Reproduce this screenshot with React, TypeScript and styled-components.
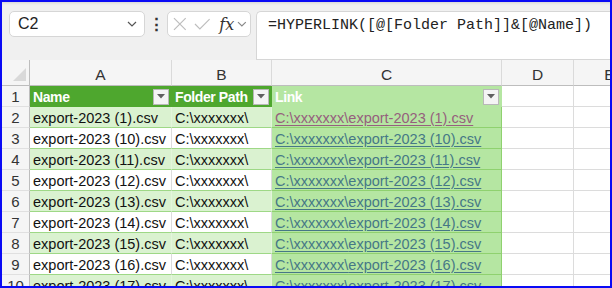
import styled, { createGlobalStyle } from "styled-components";

const GlobalStyle = createGlobalStyle`
  html, body {
    margin: 0;
    padding: 0;
    background: #ffffff;
  }
  * {
    box-sizing: border-box;
  }
`;

const Frame = styled.div`
  width: 612px;
  height: 288px;
  border: 2px solid #0a0af5;
  overflow: hidden;
  display: flex;
  flex-direction: column;
  font-family: "Liberation Sans", Arial, sans-serif;
  background: #ffffff;
`;

const Toolbar = styled.div`
  height: 58px;
  flex-shrink: 0;
  display: flex;
  align-items: flex-start;
  padding: 9px 0 0 7px;
  background: #f0f0f0;
  box-shadow: inset 0 3px 3px -2px rgba(0, 0, 0, 0.12);
`;

const NameBox = styled.div`
  width: 136px;
  height: 26px;
  display: flex;
  align-items: center;
  justify-content: space-between;
  padding: 0 7px 0 8px;
  background: #ffffff;
  border: 1px solid #d6d6d6;
  border-radius: 5px;
  font-size: 16px;
  color: #222;
`;

const Dots = styled.div`
  width: 22px;
  height: 26px;
  display: flex;
  align-items: center;
  justify-content: center;
  font-size: 17px;
  font-weight: bold;
  color: #333;
`;

const FuncBox = styled.div`
  width: 84px;
  height: 26px;
  display: flex;
  align-items: center;
  gap: 7px;
  padding: 0 3px 0 5px;
  background: #ffffff;
  border: 1px solid #d6d6d6;
  border-radius: 5px;
`;

const Fx = styled.span`
  font-family: "DejaVu Serif", "Liberation Serif", serif;
  font-style: italic;
  font-size: 16px;
  color: #333;
  margin: 0 -4px 0 2px;
`;

const FormulaBox = styled.div`
  flex: 1;
  height: 49px;
  margin-left: 5px;
  padding: 5px 0 0 11px;
  background: #ffffff;
  border: 1px solid #d6d6d6;
  border-right: none;
  border-radius: 5px 0 0 0;
  font-family: "Liberation Mono", "DejaVu Sans Mono", monospace;
  font-size: 15px;
  color: #222;
  white-space: nowrap;
`;

const Row = styled.div<{ $height: number }>`
  display: grid;
  grid-template-columns: 28px 142px 100px 230px 72px 72px;
  height: ${(p) => p.$height}px;
  flex-shrink: 0;
`;

const ColHead = styled.div`
  display: flex;
  align-items: center;
  justify-content: center;
  padding-top: 4px;
  background: #f5f5f5;
  border-right: 1px solid #dadada;
  border-bottom: 1px solid #bdbdbd;
  font-size: 15.5px;
  color: #333;
  overflow: hidden;
`;

const Corner = styled(ColHead)`
  align-items: flex-end;
  justify-content: flex-end;
  padding: 0 3px 4px 0;
  border-right: 1px solid #bdbdbd;
`;

const RowHead = styled.div`
  display: flex;
  align-items: center;
  justify-content: center;
  background: #f5f5f5;
  border-right: 1px solid #bdbdbd;
  border-bottom: 1px solid #e0e0e0;
  font-size: 15px;
  color: #333;
`;

type Tone = "header" | "headerLight" | "band" | "plain" | "link" | "empty";

const fills: Record<Tone, string> = {
  header: "#4ea72e",
  headerLight: "#b5e6a2",
  band: "#daf2d0",
  plain: "#ffffff",
  link: "#b5e6a2",
  empty: "#ffffff",
};

const rightLines: Record<Tone, string> = {
  header: "#4ea72e",
  headerLight: "#b5e6a2",
  band: "#e4f5dc",
  plain: "#dcdcdc",
  link: "#8fd16f",
  empty: "#dcdcdc",
};

const bottomLines: Record<Tone, string> = {
  header: "#4ea72e",
  headerLight: "#b5e6a2",
  band: "#9ed886",
  plain: "#9ed886",
  link: "#8fd16f",
  empty: "#dcdcdc",
};

const isHeader = (t: Tone) => t === "header" || t === "headerLight";

const Cell = styled.div<{ $tone: Tone }>`
  display: flex;
  align-items: center;
  justify-content: space-between;
  gap: 2px;
  padding: 1px 2px 0 3px;
  background: ${(p) => fills[p.$tone]};
  border-right: 1px solid ${(p) => rightLines[p.$tone]};
  border-bottom: 1px solid ${(p) => bottomLines[p.$tone]};
  font-size: ${(p) => (isHeader(p.$tone) ? "14px" : "14.5px")};
  font-weight: ${(p) => (isHeader(p.$tone) ? "bold" : "normal")};
  letter-spacing: ${(p) => (isHeader(p.$tone) ? "-0.4px" : "0")};
  color: ${(p) => (isHeader(p.$tone) ? "#ffffff" : "#111")};
  white-space: nowrap;
  overflow: hidden;
`;

const FilterButton = styled.span`
  width: 16px;
  height: 16px;
  flex-shrink: 0;
  display: flex;
  align-items: center;
  justify-content: center;
  background: #f4f4f4;
  border: 1px solid #b8b8b8;
`;

const LinkText = styled.span<{ $visited?: boolean }>`
  color: ${(p) => (p.$visited ? "#96607d" : "#467886")};
  text-decoration: underline;
  text-underline-offset: 2px;
`;

function Chevron({ color = "#555" }: { color?: string }) {
  return (
    <svg width="10" height="6" viewBox="0 0 10 6">
      <path d="M1 1 L5 5 L9 1" fill="none" stroke={color} strokeWidth="1.2" />
    </svg>
  );
}

function DownTriangle() {
  return (
    <svg width="8" height="5" viewBox="0 0 8 5">
      <path d="M0 0 H8 L4 4.5 Z" fill="#606060" />
    </svg>
  );
}

const files = [1, 10, 11, 12, 13, 14, 15, 16, 17];

export default function App() {
  return (
    <>
      <GlobalStyle />
      <Frame>
        <Toolbar>
          <NameBox>
            <span>C2</span>
            <Chevron />
          </NameBox>
          <Dots>⋮</Dots>
          <FuncBox>
            <svg width="14" height="14" viewBox="0 0 14 14">
              <path d="M1 1 L13 13 M13 1 L1 13" stroke="#bdbdbd" strokeWidth="1.2" />
            </svg>
            <svg width="17" height="13" viewBox="0 0 17 13">
              <path d="M1 6 L6 11 L16 1" fill="none" stroke="#bdbdbd" strokeWidth="1.2" />
            </svg>
            <Fx>fx</Fx>
            <Chevron color="#888" />
          </FuncBox>
          <FormulaBox>=HYPERLINK([@[Folder Path]]&amp;[@Name])</FormulaBox>
        </Toolbar>

        <Row $height={26}>
          <Corner>
            <svg width="13" height="13" viewBox="0 0 13 13">
              <path d="M13 0 V13 H0 Z" fill="#d9d9d9" />
            </svg>
          </Corner>
          <ColHead>A</ColHead>
          <ColHead>B</ColHead>
          <ColHead>C</ColHead>
          <ColHead>D</ColHead>
          <ColHead>E</ColHead>
        </Row>

        <Row $height={21}>
          <RowHead>1</RowHead>
          <Cell $tone="header">
            <span>Name</span>
            <FilterButton>
              <DownTriangle />
            </FilterButton>
          </Cell>
          <Cell $tone="header">
            <span>Folder Path</span>
            <FilterButton>
              <DownTriangle />
            </FilterButton>
          </Cell>
          <Cell $tone="headerLight">
            <span>Link</span>
            <FilterButton>
              <DownTriangle />
            </FilterButton>
          </Cell>
          <Cell $tone="empty" />
          <Cell $tone="empty" />
        </Row>

        {files.map((n, i) => {
          const tone: Tone = i % 2 === 0 ? "band" : "plain";
          const name = `export-2023 (${n}).csv`;
          return (
            <Row $height={21} key={n}>
              <RowHead>{i + 2}</RowHead>
              <Cell $tone={tone}>{name}</Cell>
              <Cell $tone={tone}>C:\xxxxxxx\</Cell>
              <Cell $tone="link">
                <LinkText $visited={i === 0}>C:\xxxxxxx\{name}</LinkText>
              </Cell>
              <Cell $tone="empty" />
              <Cell $tone="empty" />
            </Row>
          );
        })}
      </Frame>
    </>
  );
}
